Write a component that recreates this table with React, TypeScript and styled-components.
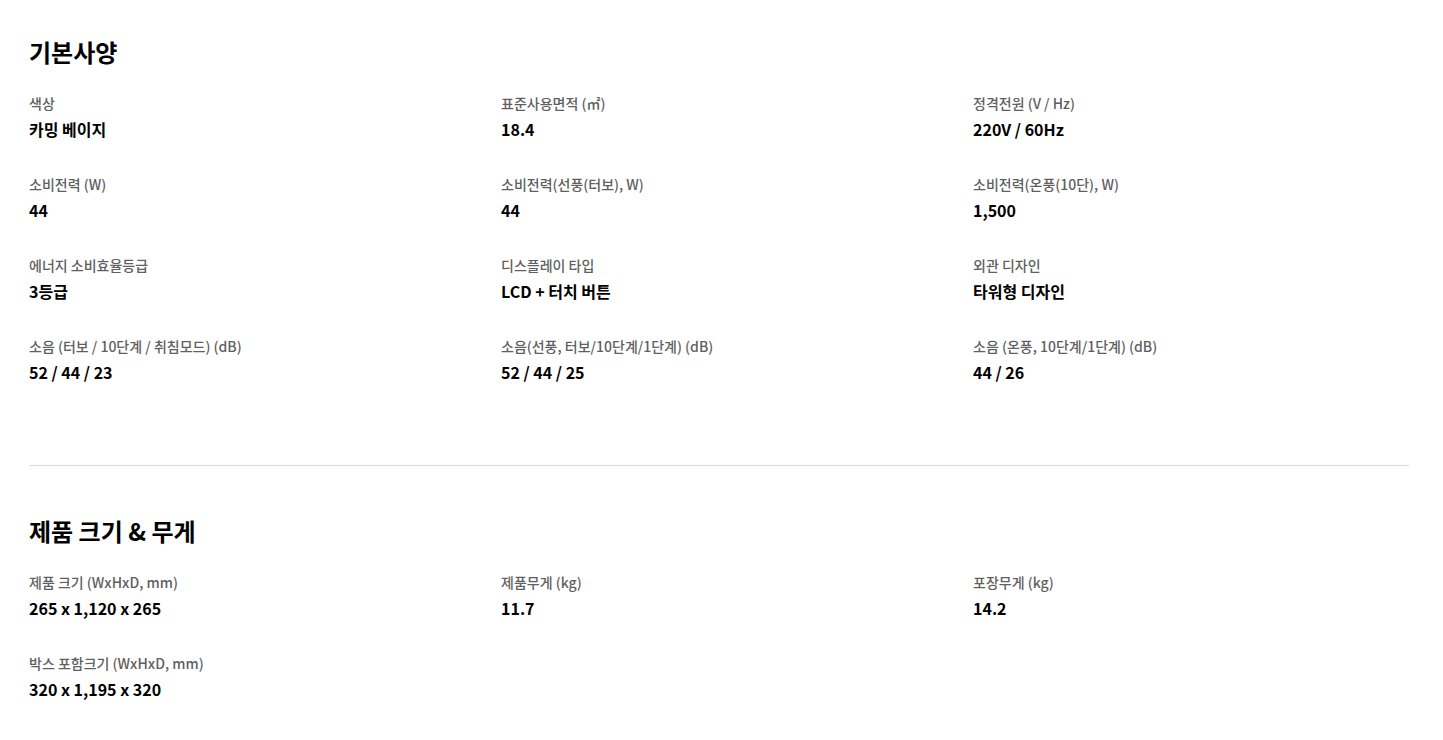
import React from 'react';
import styled, { createGlobalStyle } from 'styled-components';

interface SpecItem {
    label: string;
    value: string;
}

interface SpecSection {
    title: string;
    items: SpecItem[];
}

const sections: SpecSection[] = [
    {
        title: '기본사양',
        items: [
            { label: '색상', value: '카밍 베이지' },
            { label: '표준사용면적 (㎡)', value: '18.4' },
            { label: '정격전원 (V / Hz)', value: '220V / 60Hz' },
            { label: '소비전력 (W)', value: '44' },
            { label: '소비전력(선풍(터보), W)', value: '44' },
            { label: '소비전력(온풍(10단), W)', value: '1,500' },
            { label: '에너지 소비효율등급', value: '3등급' },
            { label: '디스플레이 타입', value: 'LCD + 터치 버튼' },
            { label: '외관 디자인', value: '타워형 디자인' },
            { label: '소음 (터보 / 10단계 / 취침모드) (dB)', value: '52 / 44 / 23' },
            { label: '소음(선풍, 터보/10단계/1단계) (dB)', value: '52 / 44 / 25' },
            { label: '소음 (온풍, 10단계/1단계) (dB)', value: '44 / 26' },
        ],
    },
    {
        title: '제품 크기 & 무게',
        items: [
            { label: '제품 크기 (WxHxD, mm)', value: '265 x 1,120 x 265' },
            { label: '제품무게 (kg)', value: '11.7' },
            { label: '포장무게 (kg)', value: '14.2' },
            { label: '박스 포함크기 (WxHxD, mm)', value: '320 x 1,195 x 320' },
        ],
    },
];

const App: React.FC = () => {
    return (
        <>
            <GlobalStyle />
            <Page>
                {sections.map((section, index) => (
                    <React.Fragment key={section.title}>
                        {index > 0 && <Divider />}
                        <Section>
                            <Title>{section.title}</Title>
                            <Grid>
                                {section.items.map((item) => (
                                    <Item key={item.label}>
                                        <Label>{item.label}</Label>
                                        <Value>{item.value}</Value>
                                    </Item>
                                ))}
                            </Grid>
                        </Section>
                    </React.Fragment>
                ))}
            </Page>
        </>
    );
};

export default App;

const GlobalStyle = createGlobalStyle`
    body {
        margin: 0;
        background: #ffffff;
        font-family: 'Noto Sans CJK KR', 'Noto Sans', sans-serif;
        color: #000000;
    }
`;

const Page = styled.div`
    width: 1380px;
    padding: 34px 0 40px 29px;
`;

const Section = styled.section`
    display: flex;
    flex-direction: column;
    gap: 23px;
`;

const Title = styled.h2`
    margin: 0;
    font-size: 24px;
    line-height: 36px;
    font-weight: 700;
`;

const Grid = styled.div`
    display: grid;
    grid-template-columns: repeat(3, 436px);
    column-gap: 36px;
    row-gap: 33px;
`;

const Item = styled.div`
    display: flex;
    flex-direction: column;
    gap: 4px;
`;

const Label = styled.div`
    font-size: 14px;
    line-height: 20px;
    font-weight: 500;
    color: #5f5f5f;
`;

const Value = styled.div`
    font-size: 16px;
    line-height: 24px;
    font-weight: 700;
    color: #000000;
`;

const Divider = styled.hr`
    margin: 81px 0 47px 0;
    border: none;
    height: 1px;
    background-color: #dddddd;
`;
